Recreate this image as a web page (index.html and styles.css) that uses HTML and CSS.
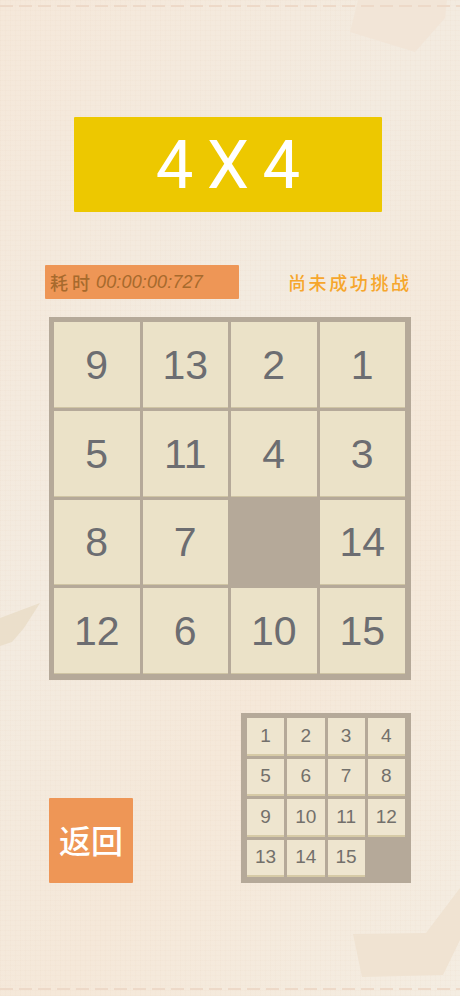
FILE: index.html
```html
<!DOCTYPE html>
<html lang="zh">
<head>
<meta charset="utf-8">
<title>4 X 4</title>
<link rel="stylesheet" href="styles.css">
</head>
<body>
<svg class="decor" width="460" height="996" viewBox="0 0 460 996" aria-hidden="true">
  <polygon class="shape-light" points="350,32 358,0 447,0 445,18 415,52"/>
  <polygon class="shape-left" points="0,618 40,603 24,628 12,642 0,646"/>
  <polygon class="shape-low" points="353,934 426,933 460,888 460,940 443,975 362,977"/>
  <line class="dash" x1="0" y1="6" x2="460" y2="6"/>
  <line class="dash" x1="0" y1="989" x2="460" y2="989"/>
</svg>
<main class="page">
  <h1 class="title">4 X 4</h1>
  <div class="status">
    <div class="timer"><span class="timer-label">耗时</span><span class="timer-value">00:00:00:727</span></div>
    <div class="record">尚未成功挑战</div>
  </div>
  <div class="board">
    <div class="tile">9</div><div class="tile">13</div><div class="tile">2</div><div class="tile">1</div>
    <div class="tile">5</div><div class="tile">11</div><div class="tile">4</div><div class="tile">3</div>
    <div class="tile">8</div><div class="tile">7</div><div class="gap"></div><div class="tile">14</div>
    <div class="tile">12</div><div class="tile">6</div><div class="tile">10</div><div class="tile">15</div>
  </div>
  <div class="bottom">
    <button class="back">返回</button>
    <div class="goal">
      <div class="mini">1</div><div class="mini">2</div><div class="mini">3</div><div class="mini">4</div>
      <div class="mini">5</div><div class="mini">6</div><div class="mini">7</div><div class="mini">8</div>
      <div class="mini">9</div><div class="mini">10</div><div class="mini">11</div><div class="mini">12</div>
      <div class="mini">13</div><div class="mini">14</div><div class="mini">15</div><div class="gap"></div>
    </div>
  </div>
</main>
</body>
</html>
```
FILE: styles.css
```css
* { box-sizing: border-box; }
html, body { margin: 0; padding: 0; }
body {
  position: relative;
  width: 460px;
  height: 996px;
  overflow: hidden;
  font-family: "Liberation Sans", Arial, sans-serif;
  background-color: #f4e9dc;
  background-image:
    repeating-linear-gradient(0deg, rgba(222,190,160,.05) 0 1px, transparent 1px 5px),
    repeating-linear-gradient(90deg, rgba(222,190,160,.05) 0 1px, transparent 1px 5px),
    linear-gradient(125deg, #f5e8da 0%, #f3ebe0 40%, #f5e8d9 65%, #f4ede2 100%);
}
.decor { position: absolute; left: 0; top: 0; }
.shape-light { fill: #f2e5d7; }
.shape-left { fill: #ebdfcb; }
.shape-low { fill: #f0e3d2; }
.dash { stroke: #edd9c8; stroke-width: 2; stroke-dasharray: 13 6; }
.page { position: relative; display: flex; flex-direction: column; height: 996px; }
.title {
  margin: 117px 0 0 74px;
  width: 308px;
  height: 95px;
  display: flex;
  align-items: center;
  justify-content: center;
  padding-top: 2px;
  background: #edc800;
  border-radius: 1px;
  color: #fff;
  font-family: Roboto, sans-serif;
  font-size: 67px;
  font-weight: 400;
  word-spacing: -3px;
  line-height: 1;
}
.status { display: flex; align-items: center; margin: 53px 0 0 45px; }
.timer {
  display: flex;
  align-items: center;
  width: 194px;
  height: 34px;
  padding-left: 5px;
  background: #ee9656;
  border-radius: 1px;
  color: #a76a2d;
}
.timer-label {
  font-family: "Noto Sans CJK SC", sans-serif;
  font-size: 18px;
  font-weight: 500;
  letter-spacing: 4px;
  width: 46px;
  white-space: nowrap;
}
.timer-value { font-size: 18px; font-style: italic; letter-spacing: .15px; white-space: nowrap; }
.record {
  margin-left: 49px;
  color: #f6a62c;
  font-family: "Noto Sans CJK SC", sans-serif;
  font-size: 18px;
  font-weight: 500;
  letter-spacing: 2.6px;
  white-space: nowrap;
}
.board {
  display: grid;
  grid-template-columns: repeat(4, 1fr);
  grid-template-rows: repeat(4, 1fr);
  gap: 3px;
  width: 362px;
  height: 363px;
  margin: 18px 0 0 49px;
  padding: 5px 6px 6px 5px;
  background: #b5a999;
}
.tile {
  display: flex;
  align-items: center;
  justify-content: center;
  padding-top: 2px;
  background: #ebe2c8;
  border-bottom: 1px solid #cfc4a4;
  color: #6c6d71;
  font-size: 41px;
}
.bottom {
  display: flex;
  justify-content: space-between;
  align-items: flex-end;
  width: 362px;
  margin: 33px 0 0 49px;
}
.back {
  width: 84px;
  height: 85px;
  padding: 0 0 4px;
  border: 0;
  border-radius: 1px;
  background: #ee9656;
  color: #fff;
  font-family: "Noto Sans CJK SC", sans-serif;
  font-size: 32px;
  font-weight: 500;
}
.goal {
  display: grid;
  grid-template-columns: repeat(4, 1fr);
  grid-template-rows: repeat(4, 1fr);
  gap: 3px;
  width: 170px;
  height: 170px;
  padding: 5px 6px 6px 6px;
  background: #b5a999;
}
.mini {
  display: flex;
  align-items: center;
  justify-content: center;
  background: #eee5cf;
  border-bottom: 2px solid #d6caa6;
  color: #73706b;
  font-size: 19px;
}
```
